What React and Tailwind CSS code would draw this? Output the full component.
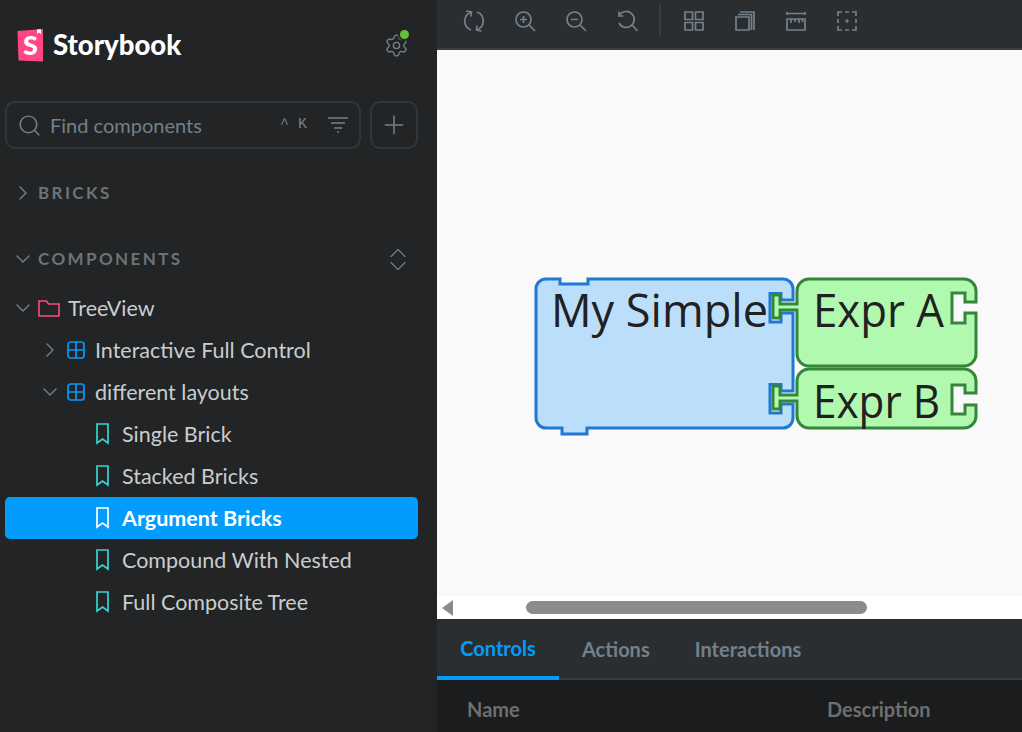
import React from "react";
import { Search, Plus, ChevronRight, ChevronDown, ChevronUp, Settings } from "lucide-react";

const stories = ["Single Brick", "Stacked Bricks", "Argument Bricks", "Compound With Nested", "Full Composite Tree"];

function Logo() {
  return (
    <svg width="27" height="34" viewBox="0 0 27 34">
      <path d="M0.500 3 L26 1 L26 33.500 L1.500 32.500 Z" fill="#ff4785" />
      <path d="M20 1.500 L20 6 L22 4.400 L24 6 L24 1.200 Z" fill="#fff" />
      <text x="6" y="26.500" fontSize="27" fontWeight="900" fill="#fff" fontFamily="Lato, sans-serif">S</text>
    </svg>
  );
}

function ComponentIcon() {
  return (
    <svg width="18" height="18" viewBox="0 0 18 18" fill="none" stroke="#029cfd" strokeWidth="1.700">
      <rect x="1" y="1" width="16" height="16" rx="2.500" />
      <path d="M9 1v16M1 9h16" />
    </svg>
  );
}

function FolderIcon() {
  return (
    <svg width="22" height="17" viewBox="0 0 22 17" fill="none" stroke="#ff4785" strokeWidth="1.600">
      <path d="M1 1h7.500l2 3H21v12H1z" />
    </svg>
  );
}

function BookmarkIcon({ color }) {
  return (
    <svg width="13" height="22" viewBox="0 0 13 22" fill="none" stroke={color} strokeWidth="1.700">
      <path d="M1 1h11v19l-5.500-4L1 20z" />
    </svg>
  );
}

function ToolIcon({ children }) {
  return (
    <button className="w-[51px] h-[42px] flex items-center justify-center shrink-0">
      <svg width="22" height="22" viewBox="0 0 22 22" fill="none" stroke="#73818c" strokeWidth="1.700">
        {children}
      </svg>
    </button>
  );
}

function Toolbar() {
  return (
    <div className="h-[50px] shrink-0 bg-[#2a2e31] border-b-2 border-[#3a3e41] flex items-start pl-[11px]">
      <ToolIcon>
        <path d="M8.500 2A9.500 9.500 0 0 0 8 20" />
        <path d="M13.500 20A9.500 9.500 0 0 0 14 2" />
        <path d="M3 1 8.500 2 7.700 6.500M18.500 21 13.500 20 14 15.500" />
      </ToolIcon>
      <ToolIcon>
        <circle cx="9.500" cy="9.500" r="7.500" />
        <path d="M15 15l6 6M6 9.500h7M9.500 6v7" />
      </ToolIcon>
      <ToolIcon>
        <circle cx="9.500" cy="9.500" r="7.500" />
        <path d="M15 15l6 6M6 9.500h7" />
      </ToolIcon>
      <ToolIcon>
        <path d="M3.500 5A8 8 0 1 1 3 13" />
        <path d="M3 1.500V6h4.500M16 15l5.500 6" />
      </ToolIcon>
      <div className="w-[2px] h-[30px] bg-[#3a3e41] mx-[7px] mt-[5px]" />
      <ToolIcon>
        <path d="M2 2h7.500v7.500H2zM12.500 2H20v7.500h-7.500zM2 12.500h7.500V20H2zM12.500 12.500H20V20h-7.500z" />
      </ToolIcon>
      <ToolIcon>
        <path d="M2 7h13v13H2zM4 4.500h13.500V20M6 2h14v18" />
      </ToolIcon>
      <ToolIcon>
        <path d="M2 2v3M20 2v3M2 3.500h18M2 9h18v11H2zM6 9v4M10 9v3M14 9v4M17.500 9v3" />
      </ToolIcon>
      <ToolIcon>
        <path d="M2 6V2h4M16 2h4v4M20 16v4h-4M6 20H2v-4M9 2h4M9 20h4M2 9v4M20 9v4" />
        <circle cx="11" cy="11" r="0.800" fill="#73818c" />
      </ToolIcon>
    </div>
  );
}

function Bricks() {
  const blue = "#1f78d1";
  const green = "#35853a";
  return (
    <svg width="460" height="170" viewBox="530 270 460 170" className="block">
      <path
        d="M546 279H560V284H588V279H783A10 10 0 0 1 793 289V300H781V293.500H770V322H781V313H793V391H781V384.500H770V413H781V404H793V418A10 10 0 0 1 783 428H587V434H562V428H546A10 10 0 0 1 536 418V289A10 10 0 0 1 546 279Z"
        fill="#bbdefb"
        stroke={blue}
        strokeWidth="3"
      />
      <path
        d="M809 279H964A12 12 0 0 1 976 291V302H965V293H952V323H965V313H976V354A12 12 0 0 1 964 366H809A12 12 0 0 1 797 354V310H780V318H773V295H780V304H797V291A12 12 0 0 1 809 279Z"
        fill="#b2f9b0"
        stroke={green}
        strokeWidth="3"
      />
      <path
        d="M809 369H964A12 12 0 0 1 976 381V393H965V385H952V414H965V405H976V416A12 12 0 0 1 964 428H809A12 12 0 0 1 797 416V401H780V409H773V386H780V395H797V381A12 12 0 0 1 809 369Z"
        fill="#b2f9b0"
        stroke={green}
        strokeWidth="3"
      />
      <g fontFamily="'Open Sans', sans-serif" fontSize="46" fill="#212121">
        <text x="551" y="327" textLength="217" lengthAdjust="spacingAndGlyphs">My Simple</text>
        <text x="813" y="327" textLength="131" lengthAdjust="spacingAndGlyphs">Expr A</text>
        <text x="813" y="418" textLength="127" lengthAdjust="spacingAndGlyphs">Expr B</text>
      </g>
    </svg>
  );
}

export default function App() {
  return (
    <div className="w-[1022px] h-[732px] flex overflow-hidden font-['Lato',sans-serif]">
      <aside className="w-[437px] shrink-0 bg-[#222425] pl-[5px] pr-[19px]">
        <div className="h-[101px] flex items-center justify-between pl-[12px] pr-[9px] pb-[11px]">
          <div className="flex items-center gap-[9px]">
            <Logo />
            <span className="text-[27.500px] font-black text-white">Storybook</span>
          </div>
          <div className="relative">
            <Settings size={25} strokeWidth={1.300} color="#73818c" />
            <span className="absolute top-[-3px] right-[0px] w-[9px] h-[9px] rounded-full bg-[#66bf3c] ring-2 ring-[#222425]" />
          </div>
        </div>

        <div className="flex gap-[9px]">
          <div className="w-[356px] h-[48px] rounded-[10px] border-2 border-[#333638] flex items-center pl-[10px] pr-[11px]">
            <Search size={25} strokeWidth={1.400} color="#73818c" />
            <span className="ml-[8px] text-[20px] text-[#73818c]">Find components</span>
            <span className="ml-auto text-[#73818c] text-[15px] font-['Liberation_Mono',monospace] flex gap-[9px]">
              <span>^</span>
              <span>K</span>
            </span>
            <svg className="ml-[21px]" width="20" height="16" viewBox="0 0 20 16" fill="none" stroke="#73818c" strokeWidth="1.500">
              <path d="M0 1h20M3 6h14M6 11h8M9 15h2" />
            </svg>
          </div>
          <div className="w-[48px] h-[48px] rounded-[10px] border-2 border-[#333638] flex items-center justify-center">
            <Plus size={30} strokeWidth={1.200} color="#73818c" />
          </div>
        </div>

        <div className="mt-[32px] h-[24px] flex items-center pl-[6px] gap-[3px]">
          <ChevronRight size={24} color="#73818c" strokeWidth={1.400} />
          <span className="text-[17px] font-bold tracking-[2.400px] text-[#6c7478]">BRICKS</span>
        </div>

        <div className="mt-[42px] h-[24px] flex items-center pl-[6px] gap-[3px] pr-[6px]">
          <ChevronDown size={24} color="#73818c" strokeWidth={1.400} />
          <span className="text-[17px] font-bold tracking-[2.400px] text-[#6c7478]">COMPONENTS</span>
          <span className="ml-auto flex flex-col items-center">
            <ChevronUp size={28} className="mb-[-15px]" color="#73818c" strokeWidth={1} />
            <ChevronDown size={28} color="#73818c" strokeWidth={1} />
          </span>
        </div>

        <ul className="mt-[16px] text-[21.500px] text-[#c9cdcf]">
          <li className="h-[42px] flex items-center pl-[6px]">
            <ChevronDown size={24} color="#73818c" strokeWidth={1.400} />
            <span className="ml-[3px] flex"><FolderIcon /></span>
            <span className="ml-[8px]">TreeView</span>
          </li>
          <li className="h-[42px] flex items-center pl-[33px]">
            <ChevronRight size={24} color="#73818c" strokeWidth={1.400} />
            <span className="ml-[5px] flex"><ComponentIcon /></span>
            <span className="ml-[10px]">Interactive Full Control</span>
          </li>
          <li className="h-[42px] flex items-center pl-[33px]">
            <ChevronDown size={24} color="#73818c" strokeWidth={1.400} />
            <span className="ml-[5px] flex"><ComponentIcon /></span>
            <span className="ml-[10px]">different layouts</span>
          </li>
          {stories.map((s) => {
            const active = s === "Argument Bricks";
            return (
              <li key={s} className={"h-[42px] flex items-center pl-[91px] rounded-[5px] " + (active ? "bg-[#029cfd] text-white font-bold" : "")}>
                <BookmarkIcon color={active ? "#fff" : "#37d5d3"} />
                <span className="ml-[13px]">{s}</span>
              </li>
            );
          })}
        </ul>
      </aside>

      <main className="flex-1 flex flex-col min-w-0">
        <Toolbar />
        <div className="flex-1 bg-[#f9f9f9] pl-[93px] pt-[220px] overflow-hidden">
          <Bricks />
        </div>
        <div className="h-[23px] shrink-0 bg-white flex items-center pl-[5px]">
          <span className="w-0 h-0 border-y-[8px] border-y-transparent border-r-[11px] border-r-[#8a8a8a]" />
          <span className="ml-[73px] w-[341px] h-[13px] rounded-full bg-[#8c8c8c]" />
        </div>
        <div className="h-[61px] shrink-0 bg-[#2a2e31] border-b-2 border-[#3a3e41] flex text-[20px] font-bold text-[#73818c]">
          <div className="h-[61px] w-[122px] flex items-center justify-center text-[#029cfd] border-b-[4px] border-[#029cfd]">Controls</div>
          <div className="h-[60px] ml-[23px] flex items-center">Actions</div>
          <div className="h-[60px] ml-[45px] flex items-center">Interactions</div>
        </div>
        <div className="h-[52px] shrink-0 bg-[#1b1c1d] flex items-center pt-[6px] text-[20px] font-bold text-[#6f6f6f]">
          <span className="w-[390px] pl-[30px]">Name</span>
          <span>Description</span>
        </div>
      </main>
    </div>
  );
}
